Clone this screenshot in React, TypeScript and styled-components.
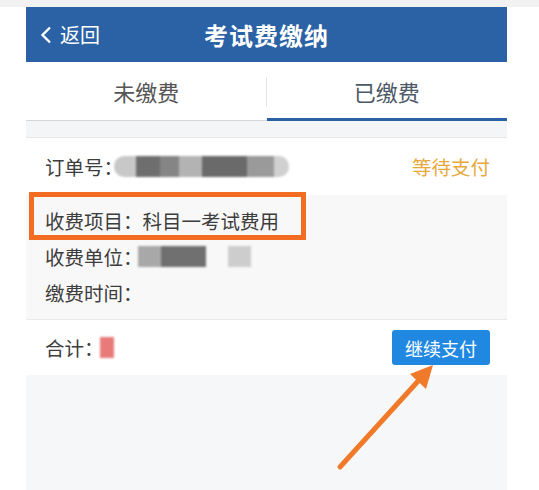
import styled, { createGlobalStyle } from "styled-components";

const GlobalStyle = createGlobalStyle`
  body {
    margin: 0;
    background: #fff;
    font-family: "Noto Sans CJK SC", "Noto Sans", sans-serif;
  }
`;

const Page = styled.div`
  position: relative;
  width: 539px;
  height: 490px;
  overflow: hidden;
  background: #fff;
  display: flex;
  flex-direction: column;
`;

const TopStrip = styled.div`
  height: 7px;
  background: #f2f2f2;
`;

const Phone = styled.div`
  margin-left: 26px;
  width: 481px;
  flex: 1;
  display: flex;
  flex-direction: column;
`;

const Header = styled.div`
  position: relative;
  height: 55px;
  background: #2b62a5;
  color: #fff;
  display: flex;
  align-items: center;
  justify-content: center;
`;

const Back = styled.div`
  position: absolute;
  left: 14px;
  top: 0;
  bottom: 0;
  display: flex;
  align-items: center;
  gap: 8px;
  font-size: 20px;
`;

const Title = styled.div`
  font-size: 24px;
  font-weight: 700;
  letter-spacing: 1px;
`;

const Tabs = styled.div`
  display: flex;
  height: 59px;
  background: #fff;
`;

const Tab = styled.div<{ active?: boolean }>`
  position: relative;
  flex: 1;
  display: flex;
  align-items: center;
  justify-content: center;
  font-size: 22px;
  color: ${({ active }) => (active ? "#4d5966" : "#555")};
  border-bottom: ${({ active }) => (active ? "3px solid #2b62a5" : "1px solid #d6d6d6")};
  padding-top: ${({ active }) => (active ? "2px" : "0")};

  &:first-child::after {
    content: "";
    position: absolute;
    right: 0;
    top: 15px;
    bottom: 13px;
    width: 1px;
    background: #e4e4e4;
  }
`;

const Gap = styled.div`
  height: 16px;
  background: #f3f5f6;
  border-bottom: 1px solid #e6e7e8;
`;

const OrderRow = styled.div`
  height: 57px;
  background: #fff;
  display: flex;
  align-items: center;
  justify-content: space-between;
  padding: 0 17px 0 19px;
  font-size: 19.5px;
  color: #3d3d3d;
`;

const Label = styled.div`
  display: flex;
  align-items: center;
`;

const Status = styled.span`
  color: #e8a83c;
`;

const Mosaic = styled.div<{ shift?: number; round?: boolean }>`
  display: flex;
  align-items: center;
  height: 21px;
  margin-left: ${({ shift }) => shift ?? 0}px;
  filter: blur(1.2px);
  border-radius: ${({ round }) => (round ? "10px" : "0")};
  overflow: hidden;
`;

const Tile = styled.span<{ w: number; c: string; ml?: number }>`
  display: block;
  width: ${({ w }) => w}px;
  height: 100%;
  background: ${({ c }) => c};
  margin-left: ${({ ml }) => ml ?? 0}px;
`;

const Details = styled.div`
  background: #f8f8f8;
  padding: 7px 19px 9px;
  font-size: 19.5px;
  color: #3d3d3d;
  border-bottom: 1px solid #e9e9e9;
`;

const DetailRow = styled.div`
  height: 36px;
  display: flex;
  align-items: center;
`;

const TotalRow = styled.div`
  height: 55px;
  background: #fff;
  display: flex;
  align-items: center;
  justify-content: space-between;
  padding: 0 17px 0 19px;
  font-size: 19.5px;
  color: #3d3d3d;
`;

const PayButton = styled.button`
  width: 98px;
  height: 35px;
  border: none;
  border-radius: 3px;
  background: #2188e2;
  color: #fff;
  font-family: inherit;
  font-size: 18px;
  padding: 0;
`;

const Rest = styled.div`
  flex: 1;
  background: #f5f7f8;
`;

const Highlight = styled.div`
  position: absolute;
  left: 29px;
  top: 192px;
  width: 277px;
  height: 48px;
  box-sizing: border-box;
  border: 5px solid #f26d22;
`;

const Overlay = styled.svg`
  position: absolute;
  left: 0;
  top: 0;
  pointer-events: none;
`;

export default function App() {
  return (
    <>
      <GlobalStyle />
      <Page>
        <TopStrip />
        <Phone>
          <Header>
            <Back>
              <svg width="12" height="18" viewBox="0 0 12 18">
                <polyline points="10,1.5 2.5,9 10,16.5" fill="none" stroke="#fff" strokeWidth="2.4" />
              </svg>
              返回
            </Back>
            <Title>考试费缴纳</Title>
          </Header>

          <Tabs>
            <Tab>未缴费</Tab>
            <Tab active>已缴费</Tab>
          </Tabs>
          <Gap />

          <OrderRow>
            <Label>
              订单号：
              <Mosaic shift={-9} round>
                <Tile w={22} c="#c8c8c8" />
                <Tile w={24} c="#6e6e6e" />
                <Tile w={19} c="#858585" />
                <Tile w={23} c="#b3b3b3" />
                <Tile w={45} c="#6a6a6a" />
                <Tile w={27} c="#9a9a9a" />
                <Tile w={15} c="#d0d0d0" />
              </Mosaic>
            </Label>
            <Status>等待支付</Status>
          </OrderRow>

          <Details>
            <DetailRow>收费项目：科目一考试费用</DetailRow>
            <DetailRow>
              收费单位：
              <Mosaic shift={-5}>
                <Tile w={23} c="#a8a8a8" />
                <Tile w={45} c="#707070" />
                <Tile w={23} c="#cdcdcd" ml={22} />
              </Mosaic>
            </DetailRow>
            <DetailRow>缴费时间：</DetailRow>
          </Details>

          <TotalRow>
            <Label>
              合计：
              <Mosaic shift={-4}>
                <Tile w={14} c="#e87a7a" />
              </Mosaic>
            </Label>
            <PayButton>继续支付</PayButton>
          </TotalRow>
          <Rest />
        </Phone>

        <Highlight />
        <Overlay width="539" height="490" viewBox="0 0 539 490">
          <line x1="340" y1="467" x2="420" y2="379" stroke="#f07a2a" strokeWidth="5" strokeLinecap="round" />
          <polygon points="433,365 426,389 410,374" fill="#f07a2a" />
        </Overlay>
      </Page>
    </>
  );
}
